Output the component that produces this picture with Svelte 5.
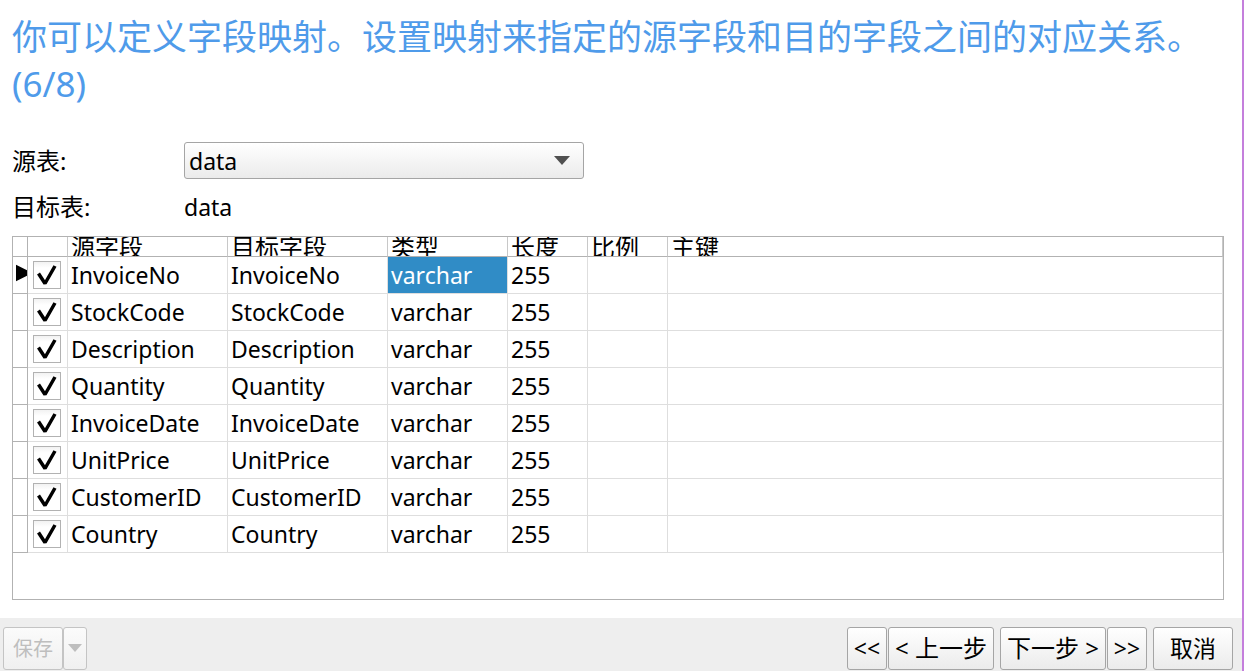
<script>
  let source = $state('data');
  let fields = $state(
    ['InvoiceNo', 'StockCode', 'Description', 'Quantity', 'InvoiceDate', 'UnitPrice', 'CustomerID', 'Country'].map(
      (name) => ({ name, type: 'varchar', length: 255, checked: true })
    )
  );
</script>

<div class="wizard">
  <main>
    <h1>你可以定义字段映射。设置映射来指定的源字段和目的字段之间的对应关系。(6/8)</h1>

    <div class="form">
      <label for="source">源表:</label>
      <div class="combo">
        <select id="source" bind:value={source}>
          <option value="data">data</option>
        </select>
        <svg class="arrow" viewBox="0 0 16 9" aria-hidden="true"><path d="M0 0H16L8 9Z" /></svg>
      </div>
      <span>目标表:</span>
      <output>data</output>
    </div>

    <div class="grid">
      <table>
        <colgroup>
          <col class="c-mark" /><col class="c-check" /><col class="c-name" /><col class="c-name" />
          <col class="c-type" /><col class="c-num" /><col class="c-num" /><col />
        </colgroup>
        <thead>
          <tr>
            <th></th>
            <th></th>
            {#each ['源字段', '目标字段', '类型', '长度', '比例', '主键'] as title}
              <th><div class="clip">{title}</div></th>
            {/each}
          </tr>
        </thead>
        <tbody>
          {#each fields as field, i}
            <tr>
              <td class="mark">
                {#if i === 0}
                  <svg viewBox="0 0 12 18" aria-hidden="true"><path d="M0 0L12 6V12L0 18Z" /></svg>
                {/if}
              </td>
              <td class="check">
                <label class="box">
                  <input type="checkbox" bind:checked={field.checked} aria-label={field.name} />
                  <svg viewBox="0 0 28 28" aria-hidden="true"><path d="M5.5 12.5L12 22.5L22 5" /></svg>
                </label>
              </td>
              <td>{field.name}</td>
              <td>{field.name}</td>
              <td class:selected={i === 0}>{field.type}</td>
              <td>{field.length}</td>
              <td></td>
              <td></td>
            </tr>
          {/each}
        </tbody>
      </table>
    </div>
  </main>

  <footer>
    <div class="group save">
      <button class="text" disabled>保存</button>
      <button class="more" disabled aria-label="保存">
        <svg class="small-arrow" viewBox="0 0 14 8" aria-hidden="true"><path d="M0 0H14L7 8Z" /></svg>
      </button>
    </div>
    <div class="group">
      <button class="jump">&lt;&lt;</button>
      <button class="step">&lt; 上一步</button>
    </div>
    <div class="group">
      <button class="step">下一步 &gt;</button>
      <button class="jump">&gt;&gt;</button>
    </div>
    <button class="cancel">取消</button>
  </footer>
</div>

<style>
  :global(body) {
    margin: 0;
    background: #fff;
  }

  .wizard {
    box-sizing: border-box;
    min-height: 100vh;
    display: flex;
    flex-direction: column;
    border-right: 2px solid #c47fdc;
    font: 23px/32px 'Noto Sans', 'Noto Sans CJK SC', sans-serif;
    color: #000;
  }

  main {
    flex: 1;
    display: flex;
    flex-direction: column;
    padding: 13px 18px 18px 12px;
  }

  h1 {
    margin: 0 0 35px;
    font-size: 35px;
    line-height: 47px;
    font-weight: 400;
    color: #4f9bea;
  }

  .form {
    display: grid;
    grid-template-columns: 172px 400px;
    row-gap: 12px;
    align-items: center;
    margin-bottom: 13px;
  }

  .form label,
  .form span {
    font-size: 24px;
  }

  .combo {
    display: grid;
    align-items: center;
  }

  select,
  .arrow {
    grid-area: 1 / 1;
  }

  select,
  button {
    font: inherit;
    color: inherit;
    border: 1px solid #a5a5a5;
    border-radius: 3px;
    background: linear-gradient(#fff, #ebebeb);
  }

  select {
    appearance: none;
    height: 37px;
    width: 100%;
    padding: 0 4px;
  }

  .arrow {
    justify-self: end;
    width: 16px;
    height: 9px;
    margin-right: 14px;
    fill: #505050;
    pointer-events: none;
  }

  .grid {
    flex: 1;
    border: 1px solid #b2b2b2;
  }

  table {
    width: 100%;
    table-layout: fixed;
    border-collapse: separate;
    border-spacing: 0;
  }

  .c-mark { width: 15px; }
  .c-check { width: 40px; }
  .c-name { width: 160px; }
  .c-type { width: 120px; }
  .c-num { width: 80px; }

  th,
  td {
    box-sizing: border-box;
    padding: 0 3px;
    text-align: left;
    font-weight: 400;
    border-right: 1px solid #dedede;
    border-bottom: 1px solid #dedede;
  }

  th {
    height: 20px;
    border-right-color: #c8c8c8;
    border-bottom-color: #b2b2b2;
  }

  .clip {
    height: 19px;
    line-height: 20px;
    font-size: 24px;
    overflow: hidden;
  }

  td {
    height: 37px;
    line-height: 36px;
  }

  th:first-child,
  .mark {
    border-color: #b2b2b2;
  }

  .mark {
    padding: 0 0 0 3px;
  }

  .mark svg {
    display: block;
    width: 11px;
    height: 18px;
    margin-bottom: 4px;
  }

  .check {
    padding: 0 5px;
  }

  .box {
    display: grid;
    width: 28px;
    height: 28px;
  }

  .box input,
  .box svg {
    grid-area: 1 / 1;
    box-sizing: border-box;
    width: 28px;
    height: 28px;
    margin: 0;
  }

  .box input {
    appearance: none;
    border: 1px solid #b2b2b2;
    background: linear-gradient(#f2f2f2, #fff 6px);
  }

  .box svg {
    visibility: hidden;
    fill: none;
    stroke: #000;
    stroke-width: 3.5;
    stroke-linejoin: bevel;
    pointer-events: none;
  }

  .box input:checked + svg {
    visibility: visible;
  }

  .selected {
    background: #308cc6;
    background-clip: padding-box;
    color: #fff;
  }

  footer {
    display: flex;
    gap: 6px;
    padding: 9px 9px 1px 3px;
    background: #eee;
  }

  .group {
    display: flex;
    gap: 1px;
  }

  .save {
    gap: 0;
    margin-right: auto;
  }

  button {
    box-sizing: border-box;
    height: 43px;
    padding: 0 0 2px;
    white-space: nowrap;
  }

  button:disabled {
    color: #bebebe;
    border-color: #c4c4c4;
    background: linear-gradient(#fbfbfb, #f0f0f0);
  }

  .text {
    width: 60px;
    padding: 0;
    font-size: 20px;
  }

  .more {
    width: 24px;
  }

  .small-arrow {
    display: block;
    width: 14px;
    height: 8px;
    margin: 0 auto;
    fill: #bebebe;
  }

  .jump { width: 40px; }
  .step { width: 106px; font-size: 24px; }
  .cancel { width: 80px; }
</style>
